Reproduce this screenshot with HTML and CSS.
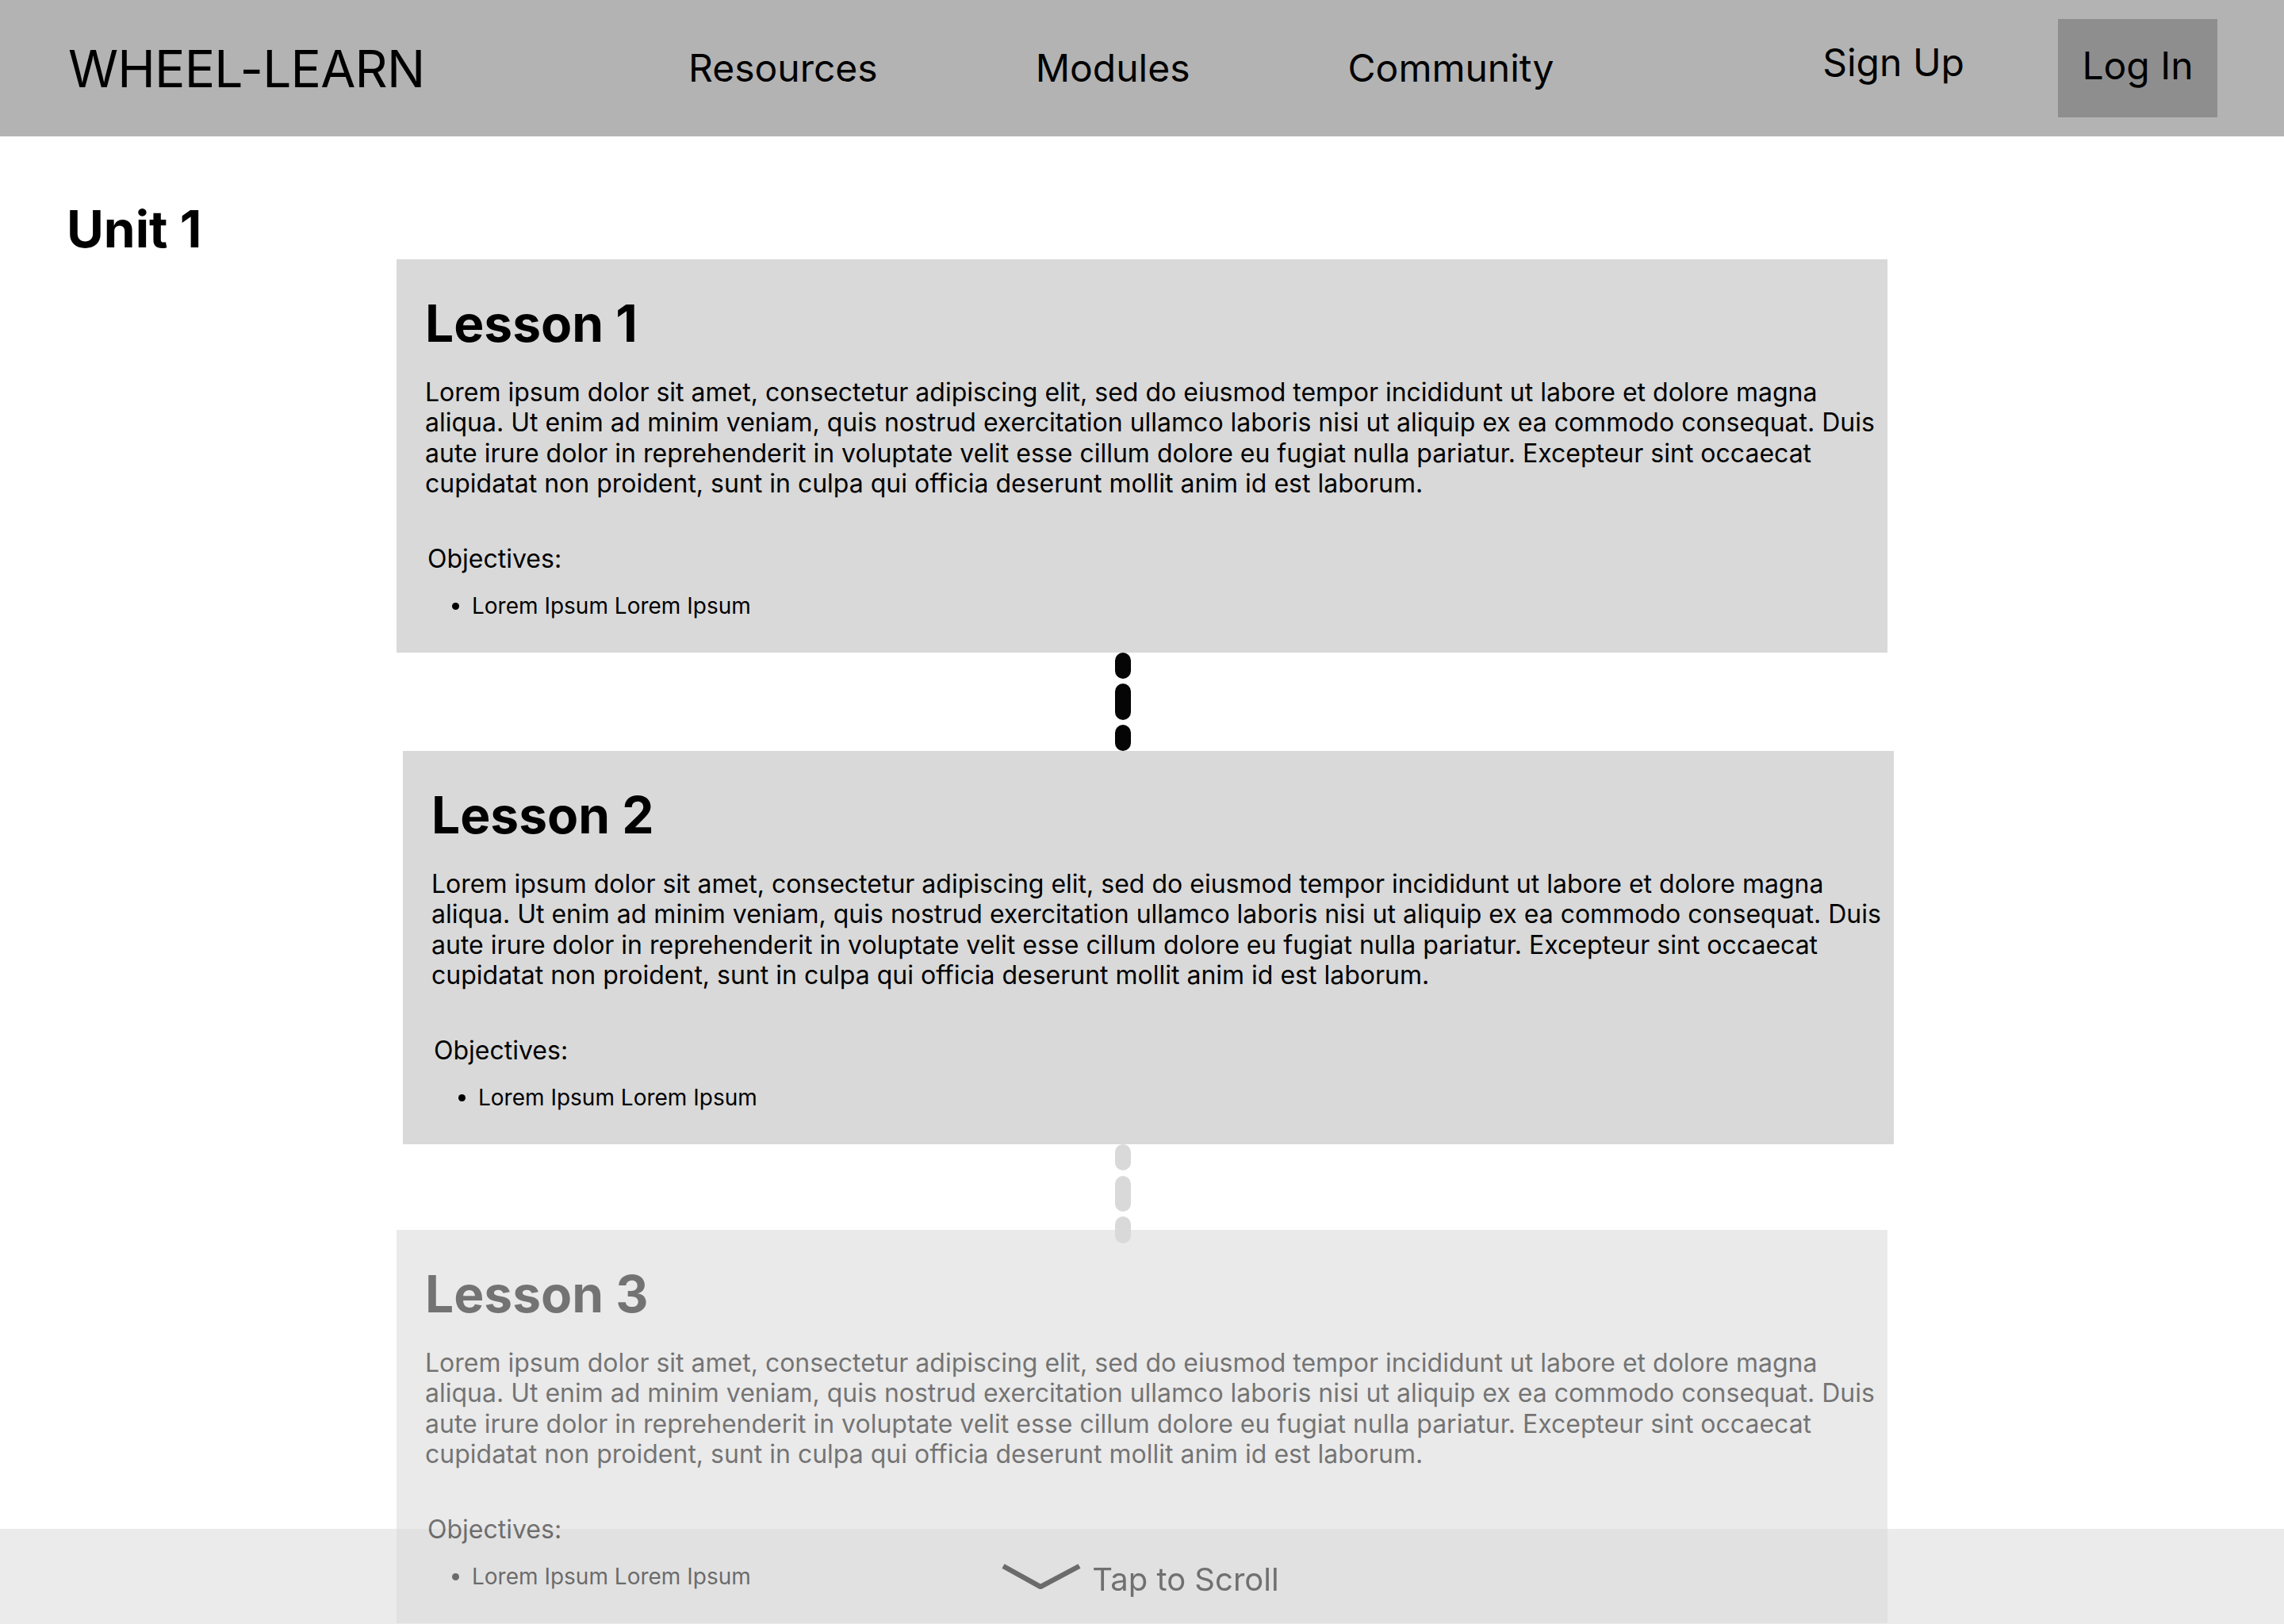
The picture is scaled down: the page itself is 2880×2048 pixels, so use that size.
FILE: index.html
```html
<!DOCTYPE html>
<html lang="en">
<head>
<meta charset="utf-8">
<title>WHEEL-LEARN – Unit 1</title>
<link rel="stylesheet" href="styles.css">
</head>
<body>
<div class="scroll-shade"></div>

<header class="topbar">
  <div class="logo">WHEEL-LEARN</div>
  <nav class="main-nav">
    <a class="nav-link" href="#">Resources</a>
    <a class="nav-link" href="#">Modules</a>
    <a class="nav-link" href="#">Community</a>
  </nav>
  <div class="auth">
    <a class="signup" href="#">Sign Up</a>
    <a class="login" href="#">Log In</a>
  </div>
</header>

<main class="unit">
  <h1 class="unit-title">Unit 1</h1>

  <section class="lesson">
    <h2 class="lesson-title">Lesson 1</h2>
    <p class="lesson-text">Lorem ipsum dolor sit amet, consectetur adipiscing elit, sed do eiusmod tempor incididunt ut labore et dolore magna aliqua. Ut enim ad minim veniam, quis nostrud exercitation ullamco laboris nisi ut aliquip ex ea commodo consequat. Duis aute irure dolor in reprehenderit in voluptate velit esse cillum dolore eu fugiat nulla pariatur. Excepteur sint occaecat cupidatat non proident, sunt in culpa qui officia deserunt mollit anim id est laborum.</p>
    <p class="objectives">Objectives:</p>
    <ul class="objective-list">
      <li>Lorem Ipsum Lorem Ipsum</li>
    </ul>
  </section>

  <div class="connector">
    <svg class="dashes" width="20" height="124" viewBox="0 0 20 124">
      <rect x="0" y="0" width="20" height="33" rx="10"/>
      <rect x="0" y="39" width="20" height="46" rx="10"/>
      <rect x="0" y="91" width="20" height="33" rx="10"/>
    </svg>
  </div>

  <section class="lesson lesson--shift">
    <h2 class="lesson-title">Lesson 2</h2>
    <p class="lesson-text">Lorem ipsum dolor sit amet, consectetur adipiscing elit, sed do eiusmod tempor incididunt ut labore et dolore magna aliqua. Ut enim ad minim veniam, quis nostrud exercitation ullamco laboris nisi ut aliquip ex ea commodo consequat. Duis aute irure dolor in reprehenderit in voluptate velit esse cillum dolore eu fugiat nulla pariatur. Excepteur sint occaecat cupidatat non proident, sunt in culpa qui officia deserunt mollit anim id est laborum.</p>
    <p class="objectives">Objectives:</p>
    <ul class="objective-list">
      <li>Lorem Ipsum Lorem Ipsum</li>
    </ul>
  </section>

  <div class="connector connector--muted">
    <svg class="dashes" width="20" height="125" viewBox="0 0 20 125">
      <rect x="0" y="0" width="20" height="33" rx="10"/>
      <rect x="0" y="40" width="20" height="45" rx="10"/>
      <rect x="0" y="91" width="20" height="34" rx="10"/>
    </svg>
  </div>

  <section class="lesson lesson--locked">
    <h2 class="lesson-title">Lesson 3</h2>
    <p class="lesson-text">Lorem ipsum dolor sit amet, consectetur adipiscing elit, sed do eiusmod tempor incididunt ut labore et dolore magna aliqua. Ut enim ad minim veniam, quis nostrud exercitation ullamco laboris nisi ut aliquip ex ea commodo consequat. Duis aute irure dolor in reprehenderit in voluptate velit esse cillum dolore eu fugiat nulla pariatur. Excepteur sint occaecat cupidatat non proident, sunt in culpa qui officia deserunt mollit anim id est laborum.</p>
    <p class="objectives">Objectives:</p>
    <ul class="objective-list">
      <li>Lorem Ipsum Lorem Ipsum</li>
    </ul>
  </section>
</main>

<div class="scroll-hint">
  <svg class="chevron" width="100" height="32" viewBox="0 0 100 32">
    <polyline points="2,3 49,29 98,3" fill="none" stroke="#6b6b6b" stroke-width="6.5"/>
  </svg>
  <span class="scroll-label">Tap to Scroll</span>
</div>
</body>
</html>
```

FILE: styles.css
```css
* {
  box-sizing: border-box;
}

html, body {
  margin: 0;
  padding: 0;
  height: 100%;
  overflow: hidden;
  background: #ffffff;
}

body {
  font-family: Inter, "Noto Sans", "Liberation Sans", sans-serif;
  color: #000000;
}

a {
  color: inherit;
  text-decoration: none;
}

/* ---------- Header ---------- */
.topbar {
  height: 172px;
  background: #b3b3b3;
  display: flex;
  align-items: center;
  padding: 0 84px 0 86px;
}

.logo {
  flex: 0 0 782px;
  font-size: 64px;
  font-weight: 400;
  line-height: 77px;
  letter-spacing: -0.8px;
}

.main-nav {
  display: flex;
  gap: 199px;
}

.nav-link {
  font-size: 48px;
  line-height: 58px;
}

.auth {
  margin-left: auto;
  display: flex;
  align-items: center;
}

.signup {
  font-size: 48px;
  line-height: 58px;
  margin-right: 118px;
  margin-bottom: 14px;
}

.login {
  display: block;
  width: 201px;
  height: 124px;
  padding-top: 30px;
  text-align: center;
  font-size: 48px;
  line-height: 58px;
  background: #8e8e8e;
}

/* ---------- Unit ---------- */
.unit {
  padding-top: 78px;
}

.unit-title {
  margin: 0;
  padding-left: 84px;
  font-size: 64px;
  font-weight: 700;
  line-height: 77px;
}

.lesson {
  width: 1880px;
  height: 496px;
  margin-left: 500px;
  padding: 42px 8px 0 36px;
  background: #d9d9d9;
  color: #000000;
}

.lesson--shift {
  margin-left: 508px;
}

.lesson--locked {
  position: relative;
  z-index: 1;
  opacity: 0.55;
}

.lesson-title {
  margin: 0;
  font-size: 64px;
  font-weight: 700;
  line-height: 78px;
}

.lesson-text {
  margin: 29px 0 0;
  font-size: 32px;
  line-height: 38.4px;
}

.objectives {
  margin: 55px 0 0 3px;
  font-size: 32px;
  line-height: 39px;
}

.objective-list {
  margin: 23px 0 0;
  padding-left: 59px;
  font-size: 28px;
  line-height: 34px;
}

/* ---------- Connectors ---------- */
.connector {
  position: relative;
  z-index: 2;
  height: 124px;
  margin-left: 1406px;
  width: 20px;
}

.connector--muted {
  height: 108px;
}

.dashes {
  display: block;
  overflow: visible;
  fill: #050505;
}

.connector--muted .dashes {
  fill: #d9d9d9;
}

/* ---------- Scroll hint ---------- */
.scroll-shade {
  position: fixed;
  left: 0;
  right: 0;
  bottom: 0;
  height: 120px;
  z-index: 0;
  background: #ebebeb;
}

.scroll-hint {
  position: fixed;
  left: 0;
  right: 0;
  bottom: 0;
  height: 120px;
  z-index: 3;
  display: flex;
  align-items: center;
  justify-content: center;
  gap: 14px;
  padding-right: 4px;
}

.chevron {
  display: block;
}

.scroll-label {
  margin-top: 7px;
  font-size: 40px;
  line-height: 48px;
  color: #707070;
}
```
